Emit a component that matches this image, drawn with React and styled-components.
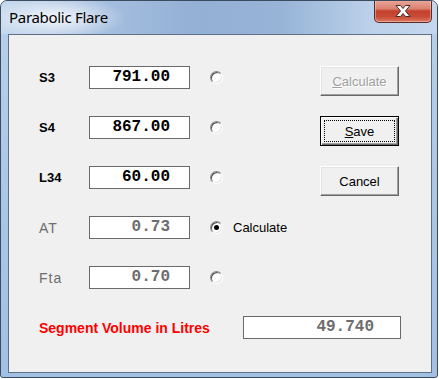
import React from "react";
import styled, { createGlobalStyle, css } from "styled-components";

const Global = createGlobalStyle`
  html, body {
    margin: 0;
    padding: 0;
    background: #ffffff;
  }
`;

const Window = styled.div`
  width: 438px;
  height: 378px;
  box-sizing: border-box;
  border: 1px solid #3d4b5e;
  border-radius: 7px 7px 3px 3px;
  background: linear-gradient(180deg, #b9d0ea 0%, #a9c5e6 60%, #a2c0e4 100%);
  display: flex;
  flex-direction: column;
  overflow: hidden;
`;

const TitleBar = styled.div`
  height: 33px;
  flex: none;
  display: flex;
  justify-content: space-between;
  align-items: flex-start;
  background:
    radial-gradient(ellipse 70px 22px at 55px 17px, rgba(255, 255, 255, 0.85), rgba(255, 255, 255, 0) 100%),
    linear-gradient(90deg, #c5d8ee 0%, #a6bfdf 22%, #93b0d5 45%, #98b4d7 65%, #bcd1ea 85%, #c4d7ed 100%);
`;

const Title = styled.span`
  font-family: "Noto Sans", "Liberation Sans", sans-serif;
  font-size: 15px;
  letter-spacing: -0.3px;
  color: #000000;
  margin: 6px 0 0 8px;
  line-height: 20px;
`;

const CloseButton = styled.div`
  width: 58px;
  height: 23px;
  margin-right: 5px;
  margin-top: -1px;
  box-sizing: border-box;
  border: 1px solid #5a2a24;
  border-top: none;
  border-radius: 0 0 5px 5px;
  background: linear-gradient(180deg, #e9a99c 0%, #d98170 40%, #c3412d 50%, #c84a36 75%, #dd7a62 100%);
  box-shadow: inset 0 0 0 1px rgba(255, 220, 210, 0.45);
  display: flex;
  align-items: center;
  justify-content: center;
`;

const Client = styled.div`
  flex: 1;
  margin: 0 5px 4px 7px;
  border: 1px solid #5f6f86;
  background: #f0f0f0;
  padding: 31px 0 0 30px;
  display: flex;
  flex-direction: column;
`;

const Top = styled.div`
  display: flex;
`;

const Fields = styled.div`
  width: 281px;
  display: flex;
  flex-direction: column;
  gap: 27px;
`;

const Row = styled.div`
  height: 23px;
  display: flex;
  align-items: center;
`;

const Label = styled.span`
  width: 50px;
  font-family: "Liberation Sans", Arial, sans-serif;
  ${(p) =>
    p.$disabled
      ? css`
          font-size: 14px;
          letter-spacing: 1px;
          color: #6d6d6d;
        `
      : css`
          font-size: 13px;
          font-weight: bold;
          color: #000000;
        `}
`;

const Field = styled.div`
  width: ${(p) => p.$width || 101}px;
  height: 23px;
  box-sizing: border-box;
  border: 1px solid #6a6a6a;
  background: #ffffff;
  display: flex;
  align-items: center;
  justify-content: flex-end;
  padding-right: ${(p) => p.$pad || 19}px;
  padding-bottom: 2px;
  font-family: "Liberation Mono", "Courier New", monospace;
  font-weight: bold;
  font-size: 16px;
  color: ${(p) => (p.$disabled ? "#6d6d6d" : "#000000")};
`;

const Radio = styled.span`
  width: 13px;
  height: 13px;
  box-sizing: border-box;
  margin-left: 20px;
  border-radius: 50%;
  border: 1px solid;
  border-color: #8a8a8a #ffffff #ffffff #8a8a8a;
  box-shadow: inset 1px 1px 0 #505050, inset -1px -1px 0 #e3e3e3;
  background: #ffffff;
  display: flex;
  align-items: center;
  justify-content: center;
  &::after {
    content: "";
    width: 5px;
    height: 5px;
    border-radius: 50%;
    background: ${(p) => (p.$checked ? "#000000" : "transparent")};
  }
`;

const RadioLabel = styled.span`
  margin-left: 10px;
  font-family: "Liberation Sans", Arial, sans-serif;
  font-size: 13px;
  color: #000000;
`;

const Buttons = styled.div`
  display: flex;
  flex-direction: column;
  gap: 20px;
`;

const Button = styled.div`
  width: 79px;
  height: 30px;
  box-sizing: border-box;
  background: #f0f0f0;
  font-family: "Liberation Sans", Arial, sans-serif;
  font-size: 13px;
  display: flex;
  align-items: center;
  justify-content: center;
  position: relative;
  border: 1px solid;
  border-color: #ffffff #696969 #696969 #ffffff;
  box-shadow: inset -1px -1px 0 #a0a0a0, inset 1px 1px 0 #e3e3e3;
  color: #000000;
  ${(p) =>
    p.$disabled &&
    css`
      color: #a0a0a0;
      text-shadow: 1px 1px 0 #ffffff;
    `}
  ${(p) =>
    p.$default &&
    css`
      outline: 1px solid #000000;
      outline-offset: -1px;
      border-color: #000000;
      box-shadow: inset 1px 1px 0 #ffffff, inset -1px -1px 0 #696969, inset -2px -2px 0 #a0a0a0;
      &::after {
        content: "";
        position: absolute;
        inset: 3px;
        border: 1px dotted #000000;
      }
    `}
`;

const SegmentRow = styled.div`
  margin-top: 27px;
  height: 23px;
  display: flex;
  align-items: center;
`;

const SegmentLabel = styled.span`
  width: 204px;
  font-family: "Liberation Sans", Arial, sans-serif;
  font-size: 14px;
  font-weight: bold;
  color: #ff0000;
`;

const rows = [
  { label: "S3", value: "791.00" },
  { label: "S4", value: "867.00" },
  { label: "L34", value: "60.00" },
  { label: "AT", value: "0.73", disabled: true, checked: true, text: "Calculate" },
  { label: "Fta", value: "0.70", disabled: true },
];

function CloseIcon() {
  return (
    <svg width="18" height="14" viewBox="0 0 18 14">
      <path
        d="M2 1.5 H6.5 L9 4.5 L11.5 1.5 H16 L11.5 7 L16 12.5 H11.5 L9 9.5 L6.5 12.5 H2 L6.5 7 Z"
        fill="#ffffff"
        stroke="#4a2a26"
        strokeWidth="1"
        strokeLinejoin="round"
      />
    </svg>
  );
}

export default function App() {
  return (
    <>
      <Global />
      <Window>
        <TitleBar>
          <Title>Parabolic Flare</Title>
          <CloseButton>
            <CloseIcon />
          </CloseButton>
        </TitleBar>
        <Client>
          <Top>
            <Fields>
              {rows.map((r) => (
                <Row key={r.label}>
                  <Label $disabled={r.disabled}>{r.label}</Label>
                  <Field $disabled={r.disabled}>{r.value}</Field>
                  <Radio $checked={r.checked} />
                  {r.text && <RadioLabel>{r.text}</RadioLabel>}
                </Row>
              ))}
            </Fields>
            <Buttons>
              <Button $disabled>
                <span>
                  <u>C</u>alculate
                </span>
              </Button>
              <Button $default>
                <span>
                  <u>S</u>ave
                </span>
              </Button>
              <Button>Cancel</Button>
            </Buttons>
          </Top>
          <SegmentRow>
            <SegmentLabel>Segment Volume in Litres</SegmentLabel>
            <Field $width={158} $pad={26} $disabled>
              49.740
            </Field>
          </SegmentRow>
        </Client>
      </Window>
    </>
  );
}
